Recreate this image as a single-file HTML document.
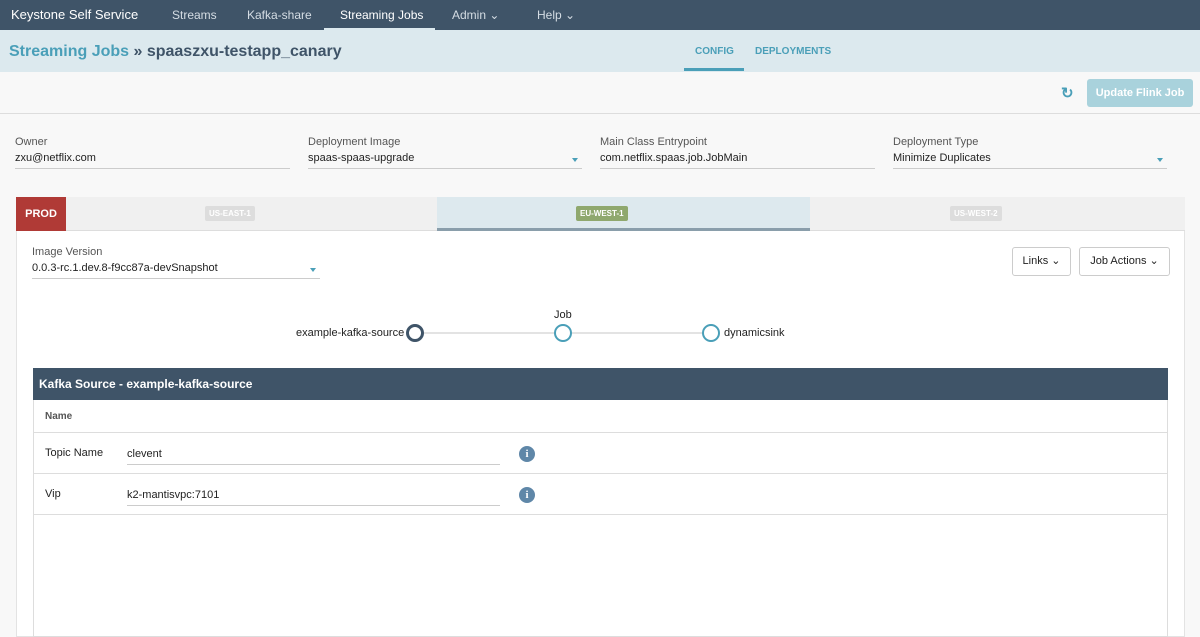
<!DOCTYPE html>
<html><head><style>
*{box-sizing:border-box;margin:0;padding:0}
body{width:1200px;height:637px;overflow:hidden;background:#f8f8f8;font-family:"Liberation Sans",sans-serif;font-size:11px;color:#222;position:relative}
.a{position:absolute}
.nav{left:0;top:0;width:1200px;height:30px;background:#3f5468}
.nav span{position:absolute;top:8px;color:#d5dde4;font-size:12px}
.lbl{color:#555;font-size:11px}
.fld{border-bottom:1px solid #ccc;height:18px;font-size:11px;padding-top:1px}
.caret{position:absolute;right:4px;top:7px;border-left:3px solid transparent;border-right:3px solid transparent;border-top:4px solid #4a9fb8}
.badge{position:absolute;top:9px;height:15px;padding:3px 4px;border-radius:2px;font-size:8px;font-weight:bold;color:#fff;background:#ddd}
.btn{border:1px solid #ccc;border-radius:3px;background:#fff;font-size:11px;text-align:center;line-height:27px;height:29px}
.circ{width:18px;height:18px;border-radius:50%;border:2px solid #4a9fb8;background:#fff}
.info{width:16px;height:16px;border-radius:50%;background:#5f87a8;color:#fff;font-weight:bold;font-size:11px;text-align:center;line-height:16px;font-family:"Liberation Serif",serif}
.row{left:34px;width:1133px;border-bottom:1px solid #ddd}
</style></head><body>
<div class="a nav">
<span style="left:11px;color:#fff;font-size:13px;top:7px">Keystone Self Service</span>
<span style="left:172px">Streams</span>
<span style="left:247px">Kafka-share</span>
<div class="a" style="left:324px;top:0;width:111px;height:30px;border-bottom:2px solid #dce9ee"></div>
<span style="left:340px;color:#fff">Streaming Jobs</span>
<span style="left:452px">Admin ⌄</span>
<span style="left:537px">Help ⌄</span>
</div>
<div class="a" style="left:0;top:30px;width:1200px;height:42px;background:#dce9ee"></div>
<div class="a" style="left:9px;top:43px;font-size:16px;font-weight:bold;color:#4a9fb8">Streaming Jobs <span style="color:#3f5468">» spaaszxu-testapp_canary</span></div>
<div class="a" style="left:695px;top:46px;font-size:10px;font-weight:bold;color:#4a9fb8">CONFIG</div>
<div class="a" style="left:684px;top:68px;width:60px;height:3px;background:#4a9fb8"></div>
<div class="a" style="left:755px;top:46px;font-size:10px;font-weight:bold;color:#4a9fb8">DEPLOYMENTS</div>
<div class="a" style="left:0;top:113px;width:1200px;height:1px;background:#ddd"></div>
<div class="a" style="left:1061px;top:84px;font-size:15px;font-weight:bold;color:#4a9fb8">↻</div>
<div class="a" style="left:1087px;top:79px;width:106px;height:28px;background:#a9d2dc;border-radius:3px;color:#fff;font-weight:bold;font-size:11px;text-align:center;line-height:28px">Update Flink Job</div>

<div class="a lbl" style="left:15px;top:136px">Owner</div>
<div class="a fld" style="left:15px;top:151px;width:275px">zxu@netflix.com</div>
<div class="a lbl" style="left:308px;top:136px">Deployment Image</div>
<div class="a fld" style="left:308px;top:151px;width:274px">spaas-spaas-upgrade<i class="caret"></i></div>
<div class="a lbl" style="left:600px;top:136px">Main Class Entrypoint</div>
<div class="a fld" style="left:600px;top:151px;width:275px">com.netflix.spaas.job.JobMain</div>
<div class="a lbl" style="left:893px;top:136px">Deployment Type</div>
<div class="a fld" style="left:893px;top:151px;width:274px">Minimize Duplicates<i class="caret"></i></div>

<div class="a" style="left:16px;top:197px;width:1169px;height:440px;background:#fff;border:1px solid #e3e3e3"></div>
<div class="a" style="left:16px;top:197px;width:1169px;height:34px;background:#f0f0f0;border-bottom:1px solid #ddd"></div>
<div class="a" style="left:16px;top:197px;width:50px;height:34px;background:#b03a36;color:#fff;font-weight:bold;font-size:11px;line-height:34px;text-align:center">PROD</div>
<div class="badge" style="left:205px;top:206px">US-EAST-1</div>
<div class="a" style="left:437px;top:197px;width:373px;height:34px;background:#dde9ee;border-bottom:3px solid #8a9eab"></div>
<div class="badge" style="left:576px;top:206px;background:#8fa86e">EU-WEST-1</div>
<div class="badge" style="left:950px;top:206px">US-WEST-2</div>

<div class="a lbl" style="left:32px;top:246px">Image Version</div>
<div class="a fld" style="left:32px;top:261px;width:288px">0.0.3-rc.1.dev.8-f9cc87a-devSnapshot<i class="caret"></i></div>
<div class="a btn" style="left:1012px;top:247px;width:59px">Links ⌄</div>
<div class="a btn" style="left:1079px;top:247px;width:91px">Job Actions ⌄</div>

<div class="a" style="left:415px;top:332px;width:296px;height:2px;background:#e3e3e3"></div>
<div class="a" style="left:296px;top:327px">example-kafka-source</div>
<div class="a circ" style="left:406px;top:324px;border:3px solid #3f5468"></div>
<div class="a" style="left:554px;top:309px">Job</div>
<div class="a circ" style="left:554px;top:324px"></div>
<div class="a circ" style="left:702px;top:324px"></div>
<div class="a" style="left:724px;top:327px">dynamicsink</div>

<div class="a" style="left:33px;top:368px;width:1135px;height:269px;border:1px solid #ddd;border-top:none"></div>
<div class="a" style="left:33px;top:368px;width:1135px;height:32px;background:#3f5468;color:#fff;font-weight:bold;font-size:12px;padding:9px 6px">Kafka Source - example-kafka-source</div>
<div class="a row" style="top:400px;height:33px"><span class="a" style="left:11px;top:11px;color:#555;font-weight:bold;font-size:10px">Name</span></div>
<div class="a row" style="top:433px;height:41px"><span class="a" style="left:11px;top:14px">Topic Name</span></div>
<div class="a fld" style="left:127px;top:447px;width:373px">clevent</div>
<div class="a info" style="left:519px;top:446px">i</div>
<div class="a row" style="top:474px;height:41px"><span class="a" style="left:11px;top:14px">Vip</span></div>
<div class="a fld" style="left:127px;top:488px;width:373px">k2-mantisvpc:7101</div>
<div class="a info" style="left:519px;top:487px">i</div>
</body></html>
